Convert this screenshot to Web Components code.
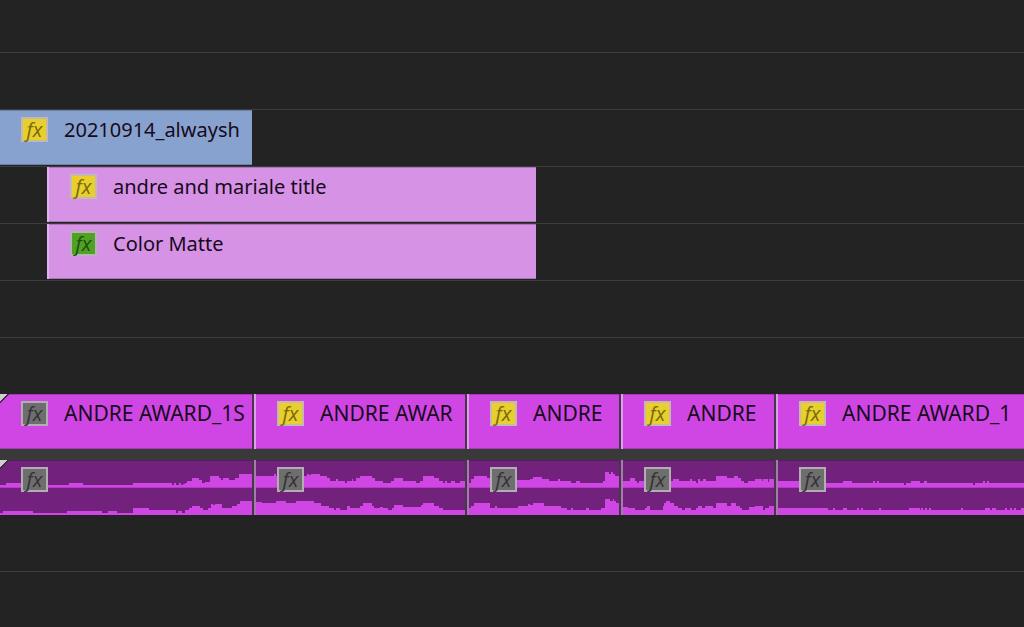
<!DOCTYPE html>
<html lang="en">
<head>
<meta charset="utf-8">
<meta name="viewport" content="width=device-width, initial-scale=1">
<title>Timeline</title>
<style>
  body {
    margin: 0;
    min-height: 100vh;
    background: #232323;
    font-family: "Noto Sans", "Open Sans", sans-serif;
  }
</style>
</head>
<body>
<edit-timeline></edit-timeline>

<script>
class FxBadge extends HTMLElement {
  constructor() {
    super();
    this.attachShadow({ mode: "open" });
  }

  static get styles() {
    return /* css */`
      :host {
        display: block;
        flex: none;
        --fill: #6e6e6e;
        --edge: #b2aeb3;
        --ink: #333;
      }

      :host([state="yellow"]) { --fill: #e8cf2c; --edge: #c3b9ae; --ink: #77680f; }
      :host([state="green"]) { --fill: #4fa222; --edge: #bab2ba; --ink: #1f4d0c; }

      button {
        display: block;
        box-sizing: border-box;
        width: 27px;
        height: 25px;
        margin: 0;
        padding: 0;
        border: 2px solid var(--edge);
        background: var(--fill);
        color: var(--ink);
        font: italic 20px/20px "Open Sans", "Noto Sans", sans-serif;
        text-align: center;
      }
    `;
  }

  connectedCallback() {
    this.shadowRoot.innerHTML = /* html */`
    <style>${FxBadge.styles}</style>
    <button type="button">fx</button>`;
  }
}

class TimelineClip extends HTMLElement {
  constructor() {
    super();
    this.attachShadow({ mode: "open" });
  }

  static get styles() {
    return /* css */`
      :host {
        display: block;
        position: relative;
        box-sizing: border-box;
        min-width: 0;
        height: 55px;
        overflow: hidden;
        background: var(--clip-color);
        border-left: 2px solid #dda0e8;
        border-right: 2px solid #4a354e;
        box-shadow: inset 0 1px #0003, inset 0 -1px #0003;
      }

      :host([kind="blue"]) { --clip-color: #88a2cf; border-right-width: 0; }
      :host([kind="pink"]) { --clip-color: #d692e4; border-color: #e2b0ec; border-right-width: 0; }
      :host([kind="video"]) { --clip-color: #d046e4; --name-size: 21px; }
      :host([kind="audio"]) { --clip-color: #72227c; border-left-color: #a67aac; }
      :host([start]) { border-left-width: 0; }
      :host([end]) { border-right-width: 0; }

      .head {
        display: flex;
        gap: 16px;
        align-items: center;
        padding: 7px 0 0 21px;
        position: relative;
      }

      .name {
        color: #160a1c;
        font-size: var(--name-size, 20px);
        line-height: 25px;
        white-space: nowrap;
      }

      .fade {
        position: absolute;
        top: 0;
        left: 0;
        width: 9px;
        height: 9px;
        background: linear-gradient(135deg, #cfcfcf 40%, #3a2a3d 42% 50%, transparent 52%);
      }

      ::slotted(svg) {
        position: absolute;
        inset: 0;
        width: 100%;
        height: 100%;
      }
    `;
  }

  connectedCallback() {
    const name = this.getAttribute("name");
    this.shadowRoot.innerHTML = /* html */`
    <style>${TimelineClip.styles}</style>
    <slot></slot>
    ${this.hasAttribute("fade") ? `<div class="fade"></div>` : ""}
    <div class="head">
      <fx-badge state="${this.getAttribute("fx") || "gray"}"></fx-badge>
      ${name ? `<span class="name">${name}</span>` : ""}
    </div>`;
  }
}

class TimelineTrack extends HTMLElement {
  constructor() {
    super();
    this.attachShadow({ mode: "open" });
  }

  static get styles() {
    return /* css */`
      :host {
        display: grid;
        grid-template-columns: var(--columns, 1fr);
        align-items: start;
        box-sizing: border-box;
        height: 57px;
        border-bottom: 1px solid #3d3d3d;
      }

      :host([size="top"]) { height: 53px; }
      :host([size="plain"]) { height: 56px; border-bottom: 0; }
      :host([size="clip"]) { height: 55px; border-bottom: 0; }
    `;
  }

  connectedCallback() {
    this.shadowRoot.innerHTML = /* html */`
    <style>${TimelineTrack.styles}</style>
    <slot></slot>`;
  }
}

// each channel is a list of x:level steps, levels counted up from its baseline
const WAVES = [
  {
    width: 252,
    left: "0:2 6:4 47:2 69:4 83:2 133:4 172:2 174:4 176:2 179:4 181:2 183:3 185:4 187:6 192:9 199:7 202:4 205:5 210:11 219:9 221:7 223:9 229:7 235:9 239:13",
    right: "0:2 3:4 33:2 67:4 102:2 108:4 117:2 133:7 149:5 176:2 178:4 182:2 185:5 189:7 192:9 200:7 203:5 208:7 211:11 213:10 215:11 222:7 232:9 237:11 240:14",
  },
  {
    width: 213,
    left: "0:11 18:13 20:11 49:11 52:13 54:12 56:13 65:11 72:9 75:6 82:8 84:6 91:4 93:6 98:8 99:6 102:9 106:11 118:9 121:6 129:4 138:6 141:9 150:6 163:4 167:6 170:11 181:9 186:6 191:4 193:6 195:4 199:6 203:4 208:6",
    right: "0:13 6:12 20:14 31:12 41:14 59:12 66:9 74:7 79:5 82:7 86:5 93:9 96:7 106:9 109:12 118:9 120:7 126:8 129:7 135:5 139:7 141:10 150:8 168:10 170:12 181:9 186:7 191:5",
  },
  {
    width: 154,
    left: "0:4 2:8 5:11 18:9 23:7 51:7 63:8 66:10 75:8 82:6 91:8 93:6 105:4 110:6 114:4 138:6 140:15 144:13 146:15 148:13 150:11",
    right: "0:7 2:9 5:12 22:7 27:9 29:7 50:9 61:11 63:10 66:12 77:9 94:7 101:5 105:7 107:5 120:7 123:5 136:7 140:16 145:14 148:16 149:14 151:12",
  },
  {
    width: 155,
    left: "0:6 7:9 12:6 14:4 16:6 51:8 57:6 69:8 71:6 75:4 77:8 79:6 82:8 85:6 95:11 107:9 114:11 118:9 121:6 124:4 128:6 135:8 143:6 144:8 149:5 150:8",
    right: "0:8 5:7 12:5 23:7 25:9 28:5 41:9 42:12 44:14 48:12 52:9 56:7 61:5 64:7 70:5 75:7 77:9 81:7 84:9 92:7 95:12 107:9 111:12 116:9 120:7 122:5 129:8 136:9 144:5 146:7 150:9",
  },
  {
    width: 248,
    left: "0:6 21:4 66:6 75:4 96:6 98:4 100:6 102:4 127:2 129:4 134:6 143:4 147:6 150:4 197:2 199:4 207:6 209:4 211:6 213:4",
    right: "0:7 50:5 55:7 57:5 66:7 70:5 80:7 82:5 84:7 86:5 102:7 104:5 132:7 143:5 144:7 146:5 148:7 150:5 152:7 154:5 184:7 186:5 209:7 214:5 216:7 220:5 229:7 231:5 234:7 236:5 238:7 240:5 245:7",
  },
];

function channel(steps, width, base) {
  const d = steps.split(" ").map((step) => {
    const [x, level] = step.split(":").map(Number);
    return `H${x}V${base - level}`;
  });
  return `<path d="M0 ${base}${d.join("")}H${width}V${base}Z"/>`;
}

function waveform({ width, left, right }) {
  return /* html */`
    <svg viewBox="0 0 ${width} 55" preserveAspectRatio="none" fill="#d046e4" shape-rendering="crispEdges" aria-hidden="true">
      ${channel(left, width, 27)}
      <path d="M0 27H${width}V28H0Z" fill="#b43ac5"/>
      ${channel(right, width, 55)}
    </svg>`;
}

const SHOTS = [
  { name: "ANDRE AWARD_1S", fx: "gray", edge: "start fade" },
  { name: "ANDRE AWAR", fx: "yellow", edge: "" },
  { name: "ANDRE", fx: "yellow", edge: "" },
  { name: "ANDRE", fx: "yellow", edge: "" },
  { name: "ANDRE AWARD_1", fx: "yellow", edge: "end" },
];

class EditTimeline extends HTMLElement {
  constructor() {
    super();
    this.attachShadow({ mode: "open" });
  }

  static get styles() {
    return /* css */`
      :host {
        display: block;
        overflow: hidden;
      }

      .blue { --columns: 252fr 772fr; }
      .pink { --columns: 47fr 489fr 488fr; }
      .shots { --columns: 254fr 213fr 154fr 155fr 248fr; }

      .divider {
        height: 11px;
        background: #393939;
      }
    `;
  }

  connectedCallback() {
    this.shadowRoot.innerHTML = /* html */`
    <style>${EditTimeline.styles}</style>
    <timeline-track size="top"></timeline-track>
    <timeline-track></timeline-track>
    <timeline-track class="blue">
      <timeline-clip kind="blue" name="20210914_alwaysh" fx="yellow" start></timeline-clip>
    </timeline-track>
    <timeline-track class="pink">
      <span></span>
      <timeline-clip kind="pink" name="andre and mariale title" fx="yellow"></timeline-clip>
    </timeline-track>
    <timeline-track class="pink">
      <span></span>
      <timeline-clip kind="pink" name="Color Matte" fx="green"></timeline-clip>
    </timeline-track>
    <timeline-track></timeline-track>
    <timeline-track size="plain"></timeline-track>
    <timeline-track size="clip" class="shots">
      ${SHOTS.map(({ name, fx, edge }) => `<timeline-clip kind="video" name="${name}" fx="${fx}" ${edge}></timeline-clip>`).join("")}
    </timeline-track>
    <div class="divider"></div>
    <timeline-track size="clip" class="shots">
      ${SHOTS.map(({ edge }, i) => `<timeline-clip kind="audio" ${edge}>${waveform(WAVES[i])}</timeline-clip>`).join("")}
    </timeline-track>
    <timeline-track></timeline-track>`;
  }
}

customElements.define("fx-badge", FxBadge);
customElements.define("timeline-clip", TimelineClip);
customElements.define("timeline-track", TimelineTrack);
customElements.define("edit-timeline", EditTimeline);
</script>
</body>
</html>
